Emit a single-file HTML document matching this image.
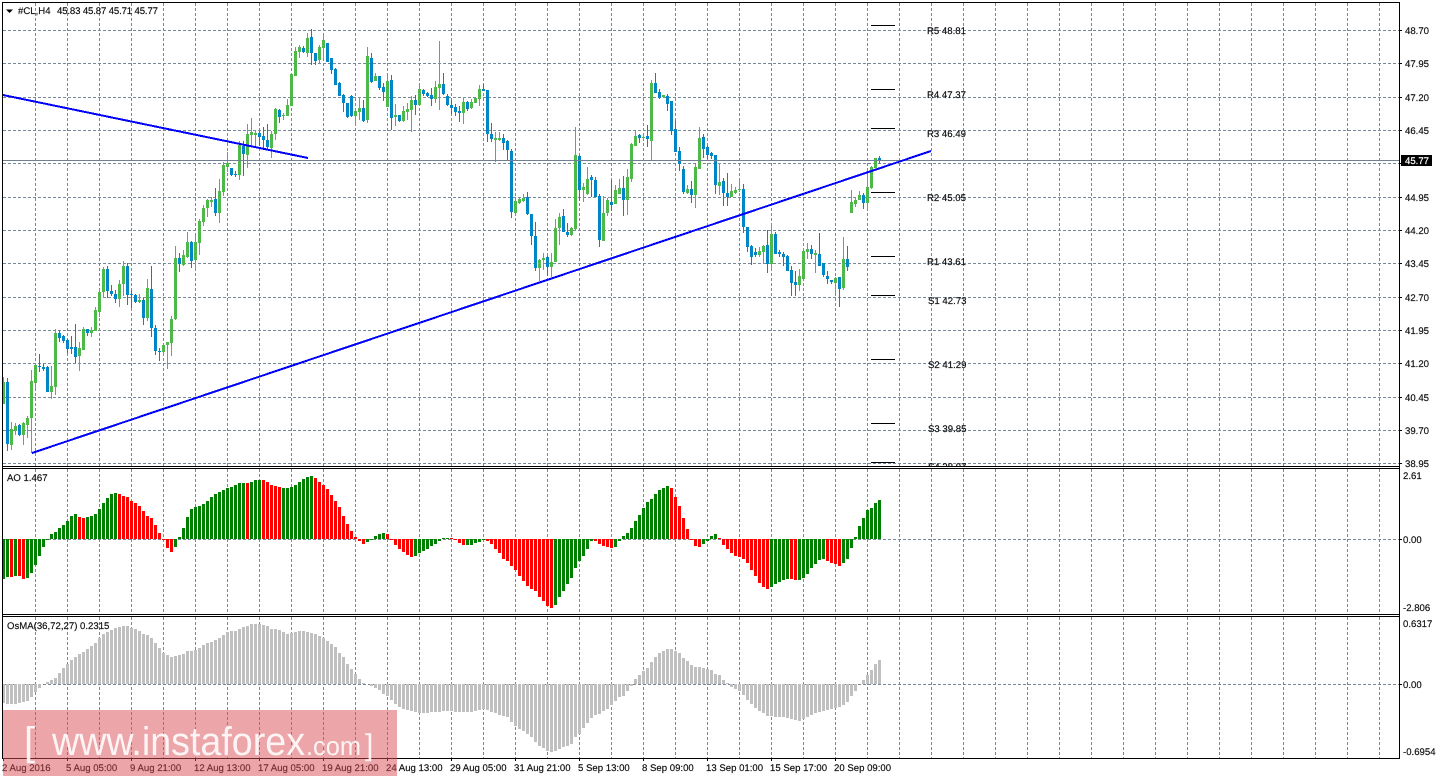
<!DOCTYPE html>
<html><head><meta charset="utf-8"><title>#CL,H4</title>
<style>
html,body{margin:0;padding:0;background:#fff;width:1439px;height:779px;overflow:hidden}
svg{display:block;position:absolute;left:0;top:0}
text{font-family:"Liberation Sans",Arial,sans-serif;font-size:9.6px;fill:#111;stroke:#111;stroke-width:.18px;text-rendering:geometricPrecision}
.wm{font-size:40px;fill:#fff;fill-opacity:.88;stroke:none}
</style></head><body>
<svg id="s" xmlns="http://www.w3.org/2000/svg" width="1439" height="779" viewBox="0 0 1439 779">
<defs>
<clipPath id="c1"><rect x="3" y="3" width="1396" height="463"/></clipPath>
<clipPath id="c2"><rect x="3" y="469" width="1396" height="145"/></clipPath>
<clipPath id="c3"><rect x="3" y="617" width="1396" height="141"/></clipPath>
<clipPath id="c4"><rect x="900" y="440" width="100" height="26"/></clipPath>
</defs>
<g id="grid" shape-rendering="crispEdges"></g>
<g id="pv" shape-rendering="crispEdges" stroke="#000" stroke-width="1"></g>
<g id="candles" clip-path="url(#c1)" shape-rendering="crispEdges"></g>
<g id="ao" clip-path="url(#c2)" shape-rendering="crispEdges"></g>
<g id="osma" clip-path="url(#c3)" shape-rendering="crispEdges"></g>
<path d="M3 160.5H1399" stroke="#708090" stroke-width="1" shape-rendering="crispEdges" fill="none"/>
<g stroke="#0000ff" stroke-width="2" fill="none" shape-rendering="crispEdges">
<path d="M3 95L308 158"/><path d="M32 453L931 151"/>
</g>
<g fill="none" stroke="#000" stroke-width="1" shape-rendering="crispEdges">
<path d="M2.5 2.5H1399.5V758.5H2.5Z"/>
<path d="M2.5 466.5H1399.5M2.5 468.5H1399.5M2.5 614.5H1399.5M2.5 616.5H1399.5"/>
</g>
<g id="ticks" stroke="#000" stroke-width="1" shape-rendering="crispEdges"></g>

<polygon points="6,9.5 13,9.5 9.5,13" fill="#000"/>
<text x="18" y="14">#CL,H4</text>
<text x="57" y="14" textLength="101">45.83 45.87 45.71 45.77</text>
<text x="7" y="481">AO 1.467</text>
<text x="7" y="629">OsMA(36,72,27) 0.2315</text>

<text x="927" y="34">R5 48.81</text>
<text x="927" y="98">R4 47.37</text>
<text x="927" y="137">R3 46.49</text>
<text x="927" y="201">R2 45.05</text>
<text x="927" y="265">R1 43.61</text>
<text x="928" y="304">S1 42.73</text>
<text x="928" y="368">S2 41.29</text>
<text x="928" y="432">S3 39.85</text>
<text x="928" y="470" clip-path="url(#c4)">S4 38.97</text>

<text x="1405" y="34">48.70</text>
<text x="1405" y="67">47.95</text>
<text x="1405" y="101">47.20</text>
<text x="1405" y="134">46.45</text>
<text x="1405" y="201">44.95</text>
<text x="1405" y="234">44.20</text>
<text x="1405" y="267">43.45</text>
<text x="1405" y="301">42.70</text>
<text x="1405" y="334">41.95</text>
<text x="1405" y="367">41.20</text>
<text x="1405" y="401">40.45</text>
<text x="1405" y="434">39.70</text>
<text x="1405" y="467">38.95</text>
<rect x="1401" y="155" width="31" height="11" fill="#000"/>
<text x="1405" y="164" style="fill:#fff;stroke:#fff">45.77</text>

<text x="1403" y="479">2.61</text>
<text x="1403" y="543">0.00</text>
<text x="1403" y="611">-2.806</text>
<text x="1403" y="627">0.6317</text>
<text x="1403" y="688">0.00</text>
<text x="1403" y="755">-0.6954</text>

<text x="2" y="771">2 Aug 2016</text>
<text x="66" y="771">5 Aug 05:00</text>
<text x="130" y="771">9 Aug 21:00</text>
<text x="194" y="771">12 Aug 13:00</text>
<text x="258" y="771">17 Aug 05:00</text>
<text x="322" y="771">19 Aug 21:00</text>
<text x="386" y="771">24 Aug 13:00</text>
<text x="450" y="771">29 Aug 05:00</text>
<text x="514" y="771">31 Aug 21:00</text>
<text x="578" y="771">5 Sep 13:00</text>
<text x="642" y="771">8 Sep 09:00</text>
<text x="706" y="771">13 Sep 01:00</text>
<text x="770" y="771">15 Sep 17:00</text>
<text x="834" y="771">20 Sep 09:00</text>

<rect x="3" y="710" width="394" height="66" fill="#da4b51" fill-opacity=".5"/>
<text class="wm" x="24" y="755">[</text>
<text class="wm" x="52" y="755" textLength="253" lengthAdjust="spacingAndGlyphs">www.instaforex</text>
<text class="wm" x="306" y="755" style="font-size:26px" textLength="55" lengthAdjust="spacingAndGlyphs">.com</text>
<text class="wm" x="365" y="755" style="font-size:30px">]</text>
</svg>
<script>
(function(){
var C="g382,404,377,404;b382,444,378,451;g429,445,422,450;g426,431,423,435;b425,435,424,436;g423,435,422,445;g418,425,416,438;g381,418,370,453;g365,383,364,389;b366,367,354,372;b367,369,364,371;b367,392,366,392;g386,392,366,399;g333,387,329,395;b333,338,330,342;b336,341,335,343;b340,349,339,353;b347,349,336,354;b347,357,324,363;g348,356,342,371;g329,350,327,350;b329,333,329,336;g330,333,327,337;g310,331,307,331;g292,312,290,317;g269,292,267,298;b269,291,266,298;b291,294,285,296;b294,299,290,303;g284,299,280,307;g266,284,261,296;b266,295,263,305;b294,295,290,308;b295,302,294,303;g300,302,294,303;b300,318,298,325;g288,318,279,321;b289,328,266,337;b328,351,325,355;b351,352,348,361;g345,352,344,355;g342,345,342,369;g319,343,316,356;g258,319,246,320;b258,264,253,272;g255,265,250,266;g242,257,232,258;b242,261,241,268;g242,260,236,271;g221,243,219,255;g208,222,205,226;g200,208,199,217;g200,202,197,207;b199,213,188,216;g191,213,179,223;g165,192,162,196;g163,167,152,172;b168,175,168,176;b174,175,171,177;g145,175,141,180;b146,154,141,176;g134,155,124,168;g132,135,118,147;g133,135,130,146;b133,137,131,146;b136,140,127,149;b140,147,124,150;g134,148,131,158;g109,134,108,140;b110,117,109,123;g115,116,113,120;g105,116,99,116;g74,106,74,106;g51,76,47,76;g47,52,45,58;b48,52,46,53;g38,53,33,57;b37,53,29,65;b53,61,53,65;g47,60,45,63;g40,48,35,60;b43,62,43,62;b58,70,58,74;b69,85,68,85;b83,96,82,96;b95,103,94,112;b103,117,103,118;b96,116,95,117;g111,116,109,125;g108,112,97,120;b108,121,100,122;g56,120,47,123;b58,82,53,83;g76,81,73,81;b76,88,76,90;b87,92,83,101;g81,107,76,107;b80,118,75,130;g115,117,104,126;b115,121,115,122;g111,121,106,122;g109,112,103,120;g100,110,96,132;b100,105,95,115;g89,105,86,105;b90,94,89,96;b93,96,92,97;b95,99,88,106;g87,99,81,103;g84,88,41,110;b84,94,73,95;b96,105,94,106;b105,108,100,114;b107,112,104,116;b111,113,106,122;g102,113,97,124;b102,109,101,111;g102,108,99,109;g98,103,97,103;g89,99,85,106;b89,91,84,91;b90,134,90,142;b134,139,123,142;g138,140,132,162;g138,140,132,141;b138,143,134,150;b141,150,140,160;b151,212,149,218;g201,213,200,213;g199,203,198,204;g198,201,194,202;b197,214,192,215;b214,236,214,245;b236,268,222,271;g260,268,259,281;g258,260,253,270;b257,267,256,276;g262,267,253,277;g228,262,219,262;g217,228,213,245;b216,232,209,232;b232,235,223,237;g228,235,227,236;g155,229,127,230;b156,190,155,201;g187,190,183,202;g179,194,167,195;b177,180,175,197;b180,197,177,197;b196,240,194,247;g213,241,196,241;g200,213,198,216;b202,205,180,211;g190,204,185,204;g188,194,179,194;b188,200,176,216;g177,200,169,215;g144,179,143,182;g136,146,131,146;b135,138,134,143;g137,138,135,140;b136,139,125,147;g83,141,80,160;b83,93,73,93;b92,98,89,99;g95,97,95,98;b96,104,94,111;b101,131,101,135;b129,152,121,152;b151,164,147,171;b169,192,166,194;g189,193,185,194;b189,195,181,203;g167,195,164,208;g138,169,127,169;b137,149,134,158;b147,155,145,159;b153,156,152,159;b155,185,155,194;g182,186,163,195;b181,193,178,206;b193,197,173,206;g191,197,184,197;g190,193,187,194;g189,190,180,192;b189,227,184,233;b227,247,227,252;b246,257,245,265;b252,255,248,257;g251,255,247,257;g246,252,245,264;b245,264,230,273;g234,264,224,270;b234,254,232,254;b252,254,250,257;b254,257,252,266;b256,271,255,271;b270,283,266,296;b282,285,271,296;g276,285,269,291;g251,279,248,279;g249,252,243,259;b249,254,245,259;g253,255,250,273;b254,266,233,266;b263,275,263,277;b276,279,271,284;b280,282,280,284;g278,283,277,293;b277,289,277,307;g259,288,237,290;b259,267,246,271;g202,213,190,213;g200,204,198,207;g195,200,191,200;b195,203,193,209;g187,203,170,209;g167,188,166,189;g158,168,158,168;b158,161,156,164".split(';');
var AO="-40g -38g -38r -37g -37r -40r -39g -34g -26g -17g -8g -1g 5g 7g 11g 14g 18g 23g 25g 22r 21r 22g 23g 25g 30g 36g 41g 45g 46g 45r 43r 42r 38r 36r 33r 28r 23r 21r 14r 6r -1r -9r -13r -8g 2g 11g 22g 30g 32g 33g 35g 38g 42g 45g 47g 49g 51g 52g 54g 56g 56g 56r 57g 59g 59g 59r 57r 54r 53r 52r 51g 51g 52g 54g 57g 60g 62g 63g 61r 57r 54r 50r 44r 38r 32r 23r 15r 8r 2r -2r -5r -3g -1g 3g 5g 6g 5r -1r -6r -10r -13r -16r -18r -17g -14g -12g -10g -7g -5g -2g 1g 1g 1r -1r -4r -6r -6g -6g -4g -3g -1g -2r -5r -10r -14r -20r -22r -27r -31r -37r -42r -47r -50r -52r -58r -62r -67r -69r -66g -58g -52g -45g -39g -29g -22g -17g -10g -2g -2r -5r -7r -8r -9r -8g -2g 3g 6g 11g 18g 24g 31g 37g 40g 45g 49g 51g 53g 51r 42r 33r 21r 10r -1r -7r -8r -5g -2g 3g 5g 1r -6r -10r -14r -17r -18r -20r -24r -31r -37r -44r -48r -50r -48g -45g -43g -41g -40g -40r -41r -41g -39g -35g -29g -25g -21g -20g -22r -24r -25r -27r -24g -20g -9g 2g 13g 21g 29g 31g 36g 39g".split(' ');
var OS=[279,282,282,282,279,276,273,261,246,234,222,216,210,204,189,174,162,150,141,132,125,117,108,99,85,72,65,60,54,52,48,48,54,57,63,72,75,84,99,114,129,135,141,138,135,132,123,123,120,114,105,99,96,90,84,75,66,63,63,57,51,48,42,42,42,45,48,57,57,60,66,72,69,66,63,63,66,69,72,78,84,93,102,111,129,141,162,177,192,207,219,223,228,234,240,252,258,270,282,291,297,300,303,306,309,309,309,306,306,306,303,303,303,306,306,306,306,306,303,300,
297,300,306,309,315,318,321,336,348,357,363,372,381,396,408,414,423,426,423,417,411,408,402,381,372,354,339,324,315,312,303,297,285,273,261,258,243,228,207,195,183,174,156,141,129,123,117,117,123,129,144,153,165,171,171,174,177,180,192,195,210,219,231,237,243,255,270,282,294,303,309,318,318,321,321,321,324,327,330,333,327,321,315,309,306,303,300,297,294,291,285,276,258,243,222,210,195,180,162,150];

var g='';
var hs=[30,63,97,130,163,197,230,263,297,330,363,397,430,463],d='',i,x;
for(i=0;i<hs.length;i++) d+='M3 '+(hs[i]+.5)+'H1399';
d+='M3 539.5H1399M3 684.5H1399';
var v1='',v2='',v3='';
for(i=0;i<=42;i++){x=35+32*i+.5;v1+='M'+x+' 3V466';v2+='M'+x+' 469V614';v3+='M'+x+' 617V758';}
g='<path d="'+d+'" stroke="#778899" stroke-dasharray="3 2" fill="none"/>'+
  '<path d="'+v1+v2+v3+'" stroke="#778899" stroke-dasharray="3 2" fill="none"/>';
document.getElementById('grid').innerHTML=g;

var pv=[25,89,128,192,256,295,359,423,462],p='';
for(i=0;i<pv.length;i++) p+='<path d="M871 '+(pv[i]+.5)+'H895"/>';
document.getElementById('pv').innerHTML=p;

var t='';
var ty=hs.concat([539,684]);
for(i=0;i<ty.length;i++) t+='<path d="M1399 '+(ty[i]+.5)+'H1402"/>';
for(i=0;i<14;i++){x=3+64*i+.5;t+='<path d="M'+x+' 758V761"/>';}
document.getElementById('ticks').innerHTML=t;

var h='';
for(i=0;i<C.length;i++){
  var col=C[i].charAt(0)=='g'?'#4eb848':'#0085c6';
  var v=C[i].slice(1).split(',').map(Number);
  var bx=4*i+2;
  h+='<rect x="'+(bx+1)+'" y="'+v[2]+'" width="1" height="'+(Math.max(v[3]-v[2],1))+'" fill="'+col+'"/>';
  h+='<rect x="'+bx+'" y="'+v[0]+'" width="3" height="'+Math.max(v[1]-v[0],1)+'" fill="'+col+'"/>';
}
document.getElementById('candles').innerHTML=h;

h='';
for(i=0;i<AO.length;i++){
  var c=AO[i].slice(-1)=='g'?'#008000':'#ff0000';
  var val=parseInt(AO[i],10);
  var y=val>=0?539-val:539;
  h+='<rect x="'+(4*i+2)+'" y="'+y+'" width="3" height="'+Math.abs(val)+'" fill="'+c+'"/>';
}
document.getElementById('ao').innerHTML=h;

h='';
for(i=0;i<OS.length;i++){
  var z=610+OS[i]/3;
  var top=Math.round(Math.min(z,684)),bot=Math.round(Math.max(z,684));
  if(bot==top)continue;
  h+='<rect x="'+(4*i+2)+'" y="'+top+'" width="3" height="'+(bot-top)+'" fill="#c0c0c0"/>';
}
document.getElementById('osma').innerHTML=h;
})();
</script>
</body></html>
